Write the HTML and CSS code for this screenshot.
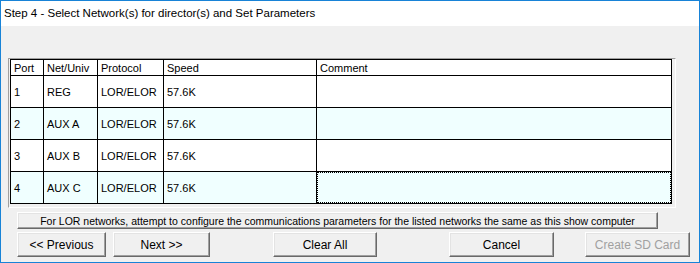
FILE: index.html
```html
<!DOCTYPE html>
<html lang="en">
<head>
  <meta charset="UTF-8">
  <title>Step 4 - Select Network(s)</title>
  <link rel="stylesheet" href="styles.css">
</head>
<body>
  <div class="window">
    <div class="titlebar">Step 4 - Select Network(s) for director(s) and Set Parameters</div>
    <div class="content">
      <div class="frame">
        <table class="grid">
          <colgroup>
            <col class="c-port">
            <col class="c-net">
            <col class="c-proto">
            <col class="c-speed">
            <col class="c-comment">
          </colgroup>
          <thead>
            <tr>
              <th>Port</th>
              <th>Net/Univ</th>
              <th>Protocol</th>
              <th>Speed</th>
              <th>Comment</th>
            </tr>
          </thead>
          <tbody>
            <tr>
              <td>1</td>
              <td>REG</td>
              <td>LOR/ELOR</td>
              <td>57.6K</td>
              <td></td>
            </tr>
            <tr class="alt">
              <td>2</td>
              <td>AUX A</td>
              <td>LOR/ELOR</td>
              <td>57.6K</td>
              <td></td>
            </tr>
            <tr>
              <td>3</td>
              <td>AUX B</td>
              <td>LOR/ELOR</td>
              <td>57.6K</td>
              <td></td>
            </tr>
            <tr class="alt">
              <td>4</td>
              <td>AUX C</td>
              <td>LOR/ELOR</td>
              <td>57.6K</td>
              <td class="focused"></td>
            </tr>
          </tbody>
        </table>
      </div>

      <button class="btn wide">For LOR networks, attempt to configure the communications parameters for the listed networks the same as this show computer</button>

      <div class="actions">
        <button class="btn prev">&lt;&lt; Previous</button>
        <button class="btn next">Next &gt;&gt;</button>
        <button class="btn clear">Clear All</button>
        <button class="btn cancel">Cancel</button>
        <button class="btn create" disabled>Create SD Card</button>
      </div>
    </div>
  </div>
</body>
</html>
```

FILE: styles.css
```css
body {
  margin: 0;
  font-family: "Liberation Sans", Arial, sans-serif;
  color: #000;
}
.window {
  width: 698px;
  height: 261px;
  border: 1px solid #1883d7;
  background-color: #f0f0f0;
  display: flex;
  flex-direction: column;
}
.titlebar {
  height: 25px;
  line-height: 25px;
  padding-left: 3px;
  background-color: #fff;
  font-size: 11.5px;
}
.content {
  padding: 32px 0 0 7px;
}
.frame {
  width: 666px;
  height: 148px;
  border: 1px solid;
  border-color: #a0a0a0 #fff #fff #a0a0a0;
}
.grid {
  margin-left: 1px;
  border-spacing: 0;
  border-top: 1px solid #000;
  border-left: 1px solid #000;
  table-layout: fixed;
  width: 662px;
  font-size: 11px;
}
.c-port { width: 33px; }
.c-net { width: 54px; }
.c-proto { width: 66px; }
.c-speed { width: 153px; }
.c-comment { width: 355px; }
th, td {
  padding: 0 0 0 3px;
  border-right: 1px solid #000;
  border-bottom: 1px solid #000;
  text-align: left;
  font-weight: normal;
  white-space: nowrap;
  overflow: hidden;
}
th {
  height: 15px;
  background-color: #fff;
}
td {
  height: 31px;
  background-color: #fff;
}
.alt td {
  background-color: #f0ffff;
}
td.focused {
  position: relative;
}
td.focused::after {
  content: "";
  position: absolute;
  top: 0;
  left: 0;
  right: 0;
  bottom: 0;
  border: 1px dotted #000;
}
.btn {
  font-family: "Liberation Sans", Arial, sans-serif;
  font-size: 11px;
  color: #000;
  background-color: #f0f0f0;
  border: 1px solid;
  border-color: #fff #696969 #696969 #fff;
  box-shadow: inset -1px -1px #a0a0a0, inset 1px 1px #e3e3e3;
  padding: 0;
  margin: 0;
  display: block;
}
.btn:disabled {
  color: #a0a0a0;
}
.wide {
  margin: 4px 0 0 9px;
  width: 641px;
  height: 17px;
  font-size: 10.5px;
}
.actions {
  display: flex;
  margin: 3px 0 0 9px;
}
.actions .btn {
  height: 25px;
  font-size: 12px;
}
.prev { width: 89px; }
.next { width: 97px; margin-left: 7px; }
.clear { width: 104px; margin-left: 63px; }
.cancel { width: 105px; margin-left: 72px; }
.create { width: 105px; margin-left: 31px; }
```
